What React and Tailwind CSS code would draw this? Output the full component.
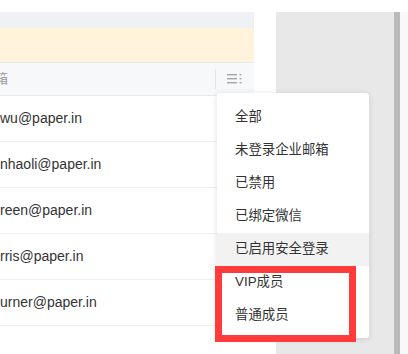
import React from 'react';

const emails = ['wu@paper.in', 'nhaoli@paper.in', 'reen@paper.in', 'rris@paper.in', 'urner@paper.in'];

const options = ['全部', '未登录企业邮箱', '已禁用', '已绑定微信', '已启用安全登录', 'VIP成员', '普通成员'];

const FilterIcon = () => (
  <svg width="16" height="12" viewBox="0 0 16 12" className="text-[#a6a6a6]">
    <rect x="0" y="1" width="10" height="1.4" fill="currentColor" />
    <rect x="0" y="5" width="10" height="1.4" fill="currentColor" />
    <rect x="0" y="9" width="10" height="1.4" fill="currentColor" />
    <rect x="12.5" y="1" width="2" height="1.4" fill="currentColor" />
    <rect x="12.5" y="5" width="2" height="1.4" fill="currentColor" />
    <rect x="12.5" y="9" width="2" height="1.4" fill="currentColor" />
  </svg>
);

const App = () => {
  return (
    <div
      className="relative w-[408px] h-[354px] overflow-hidden bg-white flex flex-col"
      style={{ fontFamily: '"Liberation Sans", Arial, "Noto Sans CJK SC", sans-serif' }}
    >
      <div className="h-[12px] shrink-0" />
      <div className="flex flex-1">
        <div className="w-[254px] flex flex-col overflow-hidden">
          <div className="h-[16px] bg-[#f0f1f5]" />
          <div className="h-[34px] bg-[#fff3dc]" />
          <div className="h-[34px] bg-[#f7f8fa] border-t border-b border-[#e8e9ec] flex items-center text-[13px] text-[#9a9a9a]">
            <span className="-ml-[18px] whitespace-nowrap">邮箱</span>
            <div className="ml-auto mr-[11px] flex items-center">
              <div className="w-px h-[20px] bg-[#e3e3e3] mr-[11px]" />
              <FilterIcon />
            </div>
          </div>
          {emails.map((e) => (
            <div key={e} className="h-[46px] border-b border-[#eeeeee] flex items-center text-[14px] text-[#333]">
              {e}
            </div>
          ))}
        </div>
        <div className="w-[22px] bg-white" />
        <div className="w-[118px] bg-[#e8e8e8]" />
        <div className="w-[6px] bg-[#bababa]" />
        <div className="flex-1 bg-[#f8f8f8]" />
      </div>

      <div className="absolute left-[217px] top-[93px] w-[152px] h-[245px] bg-white rounded-[3px] shadow-[0_1px_6px_rgba(0,0,0,0.12)] pt-[8px]">
        {options.map((o, i) => (
          <div
            key={o}
            className={`h-[33px] flex items-center pl-[18px] text-[13.4px] text-[#333] ${i === 4 ? 'bg-[#f2f2f2]' : ''}`}
          >
            {o}
          </div>
        ))}
      </div>

      <div className="absolute left-[215px] top-[266px] w-[141px] h-[76px] border-[7px] border-[#ff3b3b]" />
    </div>
  );
};

export default App;
